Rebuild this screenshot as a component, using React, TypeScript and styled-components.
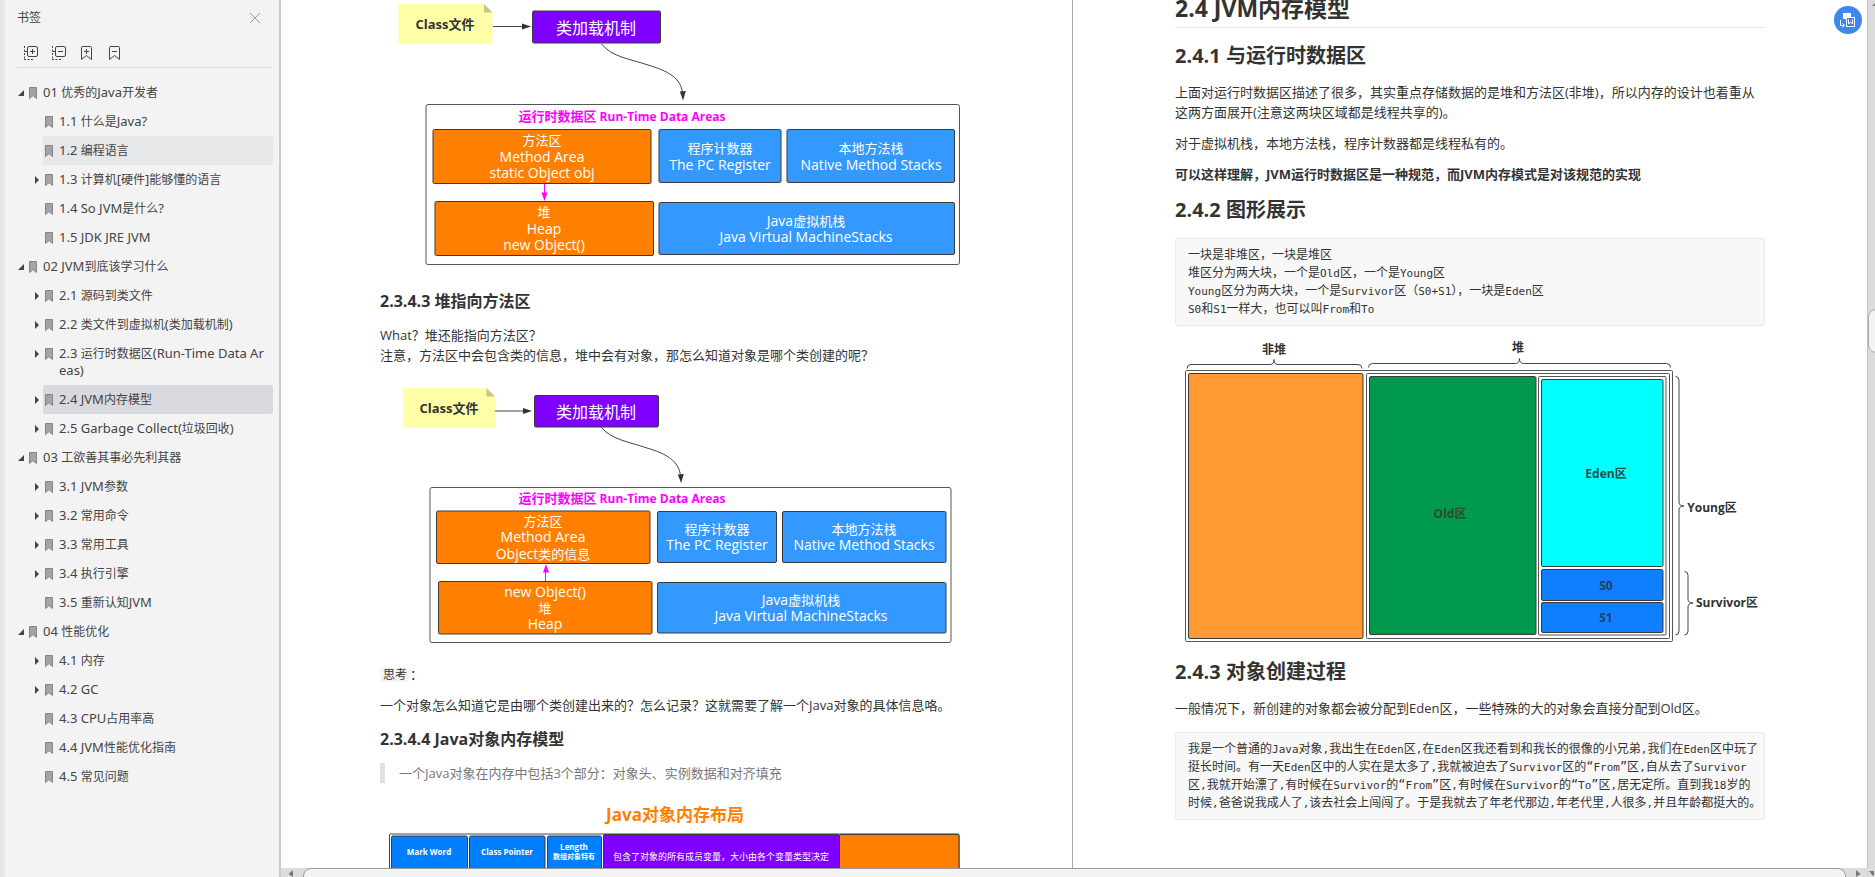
import React from 'react';
import styled, { createGlobalStyle } from 'styled-components';

const GlobalStyle = createGlobalStyle`
  * { box-sizing: border-box; }
  body {
    margin: 0;
    overflow: hidden;
    background: #fff;
    color: #333;
    font-family: 'Open Sans', 'Noto Sans CJK SC', sans-serif;
  }
  button { border: 0; padding: 0; background: none; cursor: pointer; }
  a { color: inherit; text-decoration: none; }
`;

const Shell = styled.div`
  display: flex;
  height: 100vh;
  overflow: hidden;
`;

/* ---------- bookmark panel ---------- */

const Sidebar = styled.aside`
  flex: 0 0 281px;
  background: #f3f3f3;
  border-left: 5px solid #e6e6e6;
  border-right: 2px solid #ccc;
  color: #444;
  font-family: 'Noto Sans', 'Noto Sans CJK SC', sans-serif;
`;

const PanelHead = styled.div`
  display: flex;
  align-items: center;
  justify-content: space-between;
  height: 36px;
  padding: 0 18px 0 12px;
`;

const PanelTitle = styled.h2`
  margin: 0;
  font-size: 12px;
  line-height: 20px;
  font-weight: 400;
`;

const IconButton = styled.button`
  display: flex;
  color: #444;
`;

const CloseButton = styled(IconButton)`
  color: #999;
`;

const PanelTools = styled.div`
  display: flex;
  align-items: center;
  gap: 12px;
  height: 32px;
  margin: 0 7px 10px 12px;
  padding: 2px 6px 0;
  border-bottom: 1px solid #dcdcdc;
`;

const Tree = styled.ul`
  list-style: none;
  margin: 0;
  padding: 0 6px;
`;

const Row = styled.li<{ $child?: boolean }>`
  display: flex;
  padding-left: ${p => (p.$child ? 16 : 0)}px;
`;

const Toggle = styled.button`
  flex: 0 0 16px;
  height: 29px;
  display: flex;
  align-items: center;
  justify-content: center;
  padding-left: 4px;
`;

const ToggleGap = styled.span`
  flex: 0 0 16px;
`;

const Entry = styled.a<{ $tone?: 'hover' | 'active' }>`
  flex: 1;
  display: flex;
  gap: 6px;
  padding: 6px 6px 6px 2px;
  border-radius: 2px;
  font-size: 12px;
  line-height: 17px;
  word-break: break-all;
  background: ${p =>
    p.$tone === 'active' ? '#d9dadf' : p.$tone === 'hover' ? '#e6e7e9' : 'transparent'};
  svg { flex: 0 0 8px; margin-top: 3px; }
`;

const WideLatin = styled.span`
  font-size: 13px;
  line-height: 1;
`;

/* ---------- document area ---------- */

const Main = styled.main`
  position: relative;
  flex: 1;
  min-width: 0;
  display: flex;
  flex-direction: column;
`;

const Viewport = styled.div`
  flex: 1;
  min-height: 0;
  display: flex;
`;

const Pages = styled.div`
  flex: 1;
  min-width: 0;
  display: grid;
  grid-template-columns: 791fr 795fr;
  overflow: hidden;
`;

const Page = styled.article<{ $second?: boolean }>`
  min-width: 0;
  padding: 0 99px;
  ${p => p.$second && 'padding: 0 102px; border-left: 1px solid #aaa;'}
`;

const Column = styled.div`
  max-width: 590px;
  svg { display: block; overflow: visible; }
`;

const ChapterTitle = styled.h2`
  margin: -8px 0 14px;
  padding-bottom: 3px;
  border-bottom: 1px solid #e8e8e8;
  font-size: 23px;
  line-height: 32px;
`;

const SectionTitle = styled.h3`
  margin: 12px 0;
  font-size: 20px;
  line-height: 28px;
`;

const TopicTitle = styled.h4`
  margin: 12px 0;
  font-size: 16px;
  line-height: 24px;
`;

const Text = styled.p`
  margin: 11px 0;
  font-size: 13px;
  line-height: 20px;
  ${TopicTitle} + &, ${SectionTitle} + & { margin-top: 12px; }
`;

const Chip = styled.code`
  padding: 0 3px;
  border-radius: 3px;
  background: #f3f4f4;
  font-family: 'DejaVu Sans Mono', 'Noto Sans CJK SC', monospace;
  font-size: 12px;
  line-height: 1;
`;

const Quote = styled.blockquote`
  margin: 12px 0;
  padding-left: 14px;
  border-left: 5px solid #dfe2e5;
  color: #777;
  font-size: 13px;
  line-height: 20px;
`;

const CodeBlock = styled.pre`
  margin: 14px 0 0;
  padding: 7px 12px;
  border: 1px solid #e7eaed;
  border-radius: 3px;
  background: #f8f8f8;
  font-family: 'DejaVu Sans Mono', 'Noto Sans CJK SC', monospace;
  font-size: 12px;
  line-height: 18px;
`;

const SmallLatin = styled.span`
  font-size: 11px;
  line-height: 1;
`;

const ConvertButton = styled.button`
  position: absolute;
  top: 6px;
  right: 13px;
  width: 28px;
  height: 28px;
  border-radius: 50%;
  background: #3f86ee;
  display: flex;
  align-items: center;
  justify-content: center;
`;

/* ---------- scroll bars ---------- */

const VTrack = styled.div`
  flex: 0 0 8px;
  display: flex;
  flex-direction: column;
  overflow: hidden;
  background: #dcdcdc;
  border-left: 1px solid #c4c4c4;
`;

const VThumb = styled.div`
  width: 18px;
  height: 44px;
  margin-top: 301px;
  border: 1px solid #aaa;
  border-radius: 8px;
  background: #f3f3f3;
`;

const HTrack = styled.div`
  flex: 0 0 9px;
  display: flex;
  gap: 8px;
  padding: 0 1px 0 6px;
  overflow: hidden;
  background: #dcdcdc;
`;

const HThumb = styled.div`
  flex: 1;
  height: 18px;
  border: 1px solid #999;
  border-radius: 8px;
  background: #f3f3f3;
`;

/* ---------- helpers ---------- */

function Mixed({ text, latin: Latin }: { text: string; latin: React.ElementType }) {
  return (
    <>
      {text.split(/([\x20-\x7e]+)/).map((run, i) =>
        i % 2 ? <Latin key={i}>{run}</Latin> : run
      )}
    </>
  );
}

const Bookmark = () => (
  <svg width="8" height="12" viewBox="0 0 8 12" aria-hidden="true">
    <path d="M0.5 0.5h7v11L4 8.6 0.5 11.5z" fill="#a4a4a4" stroke="#858585" />
  </svg>
);

const Latin14 = ({ children }: { children?: React.ReactNode }) => (
  <tspan fontSize={14}>{children}</tspan>
);

const Latin12 = ({ children }: { children?: React.ReactNode }) => (
  <tspan fontSize={12}>{children}</tspan>
);

function Lines({ x, ys, lines, size = 13, fill = '#fff', bold, latin }: {
  x: number; ys: number[]; lines: string[]; size?: number; fill?: string; bold?: boolean;
  latin?: React.ElementType;
}) {
  return (
    <>
      {lines.map((t, i) => (
        <text key={t} x={x} y={ys[i]} fontSize={size} fill={fill} textAnchor="middle"
          fontWeight={bold ? 700 : 400}>
          {latin ? <Mixed text={t} latin={latin} /> : t}
        </text>
      ))}
    </>
  );
}

function Box({ x, y, w, h, fill }: { x: number; y: number; w: number; h: number; fill: string }) {
  return <rect x={x} y={y} width={w} height={h} rx="1.5" fill={fill} stroke="#3a3a3a" />;
}

const ORANGE = '#ff8000';
const BLUE = '#3399ff';
const PURPLE = '#8000ff';
const PINK = '#ff00ff';

/* The canvas starts at the left edge of the text column. */
function FirstDiagram() {
  return (
    <svg width="590" height="277" viewBox="380 0 590 277" role="img" aria-label="静态变量指向堆">
      <path d="M398.5 4H484l8.500 8.500V43.500H398.500z" fill="#ffffa8" />
      <path d="M484 4l8.500 8.500H484z" fill="#c5c584" />
      <Lines x={445} ys={[29]} lines={['Class文件']} fill="#333" bold />
      <path d="M493 26.500H524" stroke="#444" />
      <path d="M522 23.500l9 3-9 3z" fill="#333" />
      <Box x={532.5} y={11} w={128} h={32} fill={PURPLE} />
      <Lines x={596} ys={[34]} lines={['类加载机制']} size={16} />
      <path d="M601.500 44C612 57 630 59 648 65C668 71 681 78 682.500 93" fill="none" stroke="#444" />
      <path d="M679.800 91.500l6-.5-2.700 9.500z" fill="#333" />
      <rect x="426" y="104.500" width="533.500" height="160" rx="2" fill="#fff" stroke="#555" />
      <Lines x={622} ys={[121]} lines={['运行时数据区 Run-Time Data Areas']} fill={PINK} latin={Latin12} bold />
      <Box x={433} y={129.5} w={218} h={54} fill={ORANGE} />
      <Lines x={542} ys={[145, 162, 178]} lines={['方法区', 'Method Area', 'static Object obj']} latin={Latin14} />
      <Box x={435} y={201.5} w={218.5} h={54} fill={ORANGE} />
      <Lines x={544} ys={[217, 234, 250]} lines={['堆', 'Heap', 'new Object()']} latin={Latin14} />
      <Box x={659} y={129.5} w={122} h={53} fill={BLUE} />
      <Lines x={720} ys={[153, 170]} lines={['程序计数器', 'The PC Register']} latin={Latin14} />
      <Box x={787} y={129.5} w={167.5} h={53} fill={BLUE} />
      <Lines x={871} ys={[153, 170]} lines={['本地方法栈', 'Native Method Stacks']} latin={Latin14} />
      <Box x={659} y={202.5} w={295.5} h={52} fill={BLUE} />
      <Lines x={806} ys={[226, 242]} lines={['Java虚拟机栈', 'Java Virtual MachineStacks']} latin={Latin14} />
      <path d="M544.500 184v10" stroke={PINK} />
      <path d="M541.500 192.500h6l-3 8.500z" fill={PINK} />
    </svg>
  );
}

function SecondDiagram() {
  return (
    <svg width="590" height="277" viewBox="380 376 590 277" role="img" aria-label="堆指向方法区">
      <path d="M403 388H486.500l8.500 8.500V427.500H403z" fill="#ffffa8" />
      <path d="M486.500 388l8.500 8.500H486.500z" fill="#c5c584" />
      <Lines x={449} ys={[413]} lines={['Class文件']} fill="#333" bold />
      <path d="M495 411H524" stroke="#444" />
      <path d="M523 408l9 3-9 3z" fill="#333" />
      <Box x={534.5} y={395.5} w={124} h={31.5} fill={PURPLE} />
      <Lines x={596} ys={[418]} lines={['类加载机制']} size={16} />
      <path d="M601.500 427.500C612 440 630 442 647 448C667 454 679 461 680.500 476" fill="none" stroke="#444" />
      <path d="M677.800 474.500l6-.5-2.700 9z" fill="#333" />
      <rect x="430" y="487.500" width="521" height="155" rx="2" fill="#fff" stroke="#555" />
      <Lines x={622} ys={[503]} lines={['运行时数据区 Run-Time Data Areas']} fill={PINK} latin={Latin12} bold />
      <Box x={436.5} y={511} w={213.5} h={52.5} fill={ORANGE} />
      <Lines x={543} ys={[526, 542, 559]} lines={['方法区', 'Method Area', 'Object类的信息']} latin={Latin14} />
      <Box x={438.5} y={581.5} w={213.5} h={52.5} fill={ORANGE} />
      <Lines x={545} ys={[597, 613, 629]} lines={['new Object()', '堆', 'Heap']} latin={Latin14} />
      <Box x={657.5} y={511.5} w={119} h={51} fill={BLUE} />
      <Lines x={717} ys={[534, 550]} lines={['程序计数器', 'The PC Register']} latin={Latin14} />
      <Box x={782.5} y={511.5} w={163.5} h={51} fill={BLUE} />
      <Lines x={864} ys={[534, 550]} lines={['本地方法栈', 'Native Method Stacks']} latin={Latin14} />
      <Box x={657.5} y={582.5} w={288.5} h={50.5} fill={BLUE} />
      <Lines x={801} ys={[605, 621]} lines={['Java虚拟机栈', 'Java Virtual MachineStacks']} latin={Latin14} />
      <path d="M545.500 581v-9" stroke={PINK} />
      <path d="M543 572.500h6l-3-8.500z" fill={PINK} />
    </svg>
  );
}

function ObjectLayout() {
  const cell = '#0080ff';
  return (
    <svg width="590" height="120" viewBox="380 795 590 120" role="img" aria-label="Java对象内存布局">
      <Lines x={675} ys={[821]} lines={['Java对象内存布局']} size={17} fill={ORANGE} bold />
      <rect x="389.500" y="834" width="569.500" height="80" rx="1" fill="#fff" stroke="#444" />
      <Box x={391.5} y={836} w={76} h={80} fill={cell} />
      <Box x={469.5} y={836} w={75.5} h={80} fill={cell} />
      <Box x={547.5} y={836} w={54} h={80} fill={cell} />
      <Box x={603.5} y={834.5} w={236} h={80} fill={PURPLE} />
      <Box x={839.5} y={834.5} w={119.5} h={80} fill={ORANGE} />
      <Lines x={429} ys={[855]} lines={['Mark Word']} size={8} bold />
      <Lines x={507} ys={[855]} lines={['Class Pointer']} size={8} bold />
      <Lines x={574} ys={[850]} lines={['Length']} size={8} bold />
      <Lines x={574} ys={[859]} lines={['数组对象特有']} size={7} bold />
      <Lines x={721} ys={[860]} lines={['包含了对象的所有成员变量，大小由各个变量类型决定']} size={9} />
    </svg>
  );
}

function MemoryDiagram() {
  const ink = '#333';
  const frame = { fill: '#fff', stroke: '#555' };
  return (
    <svg width="590" height="320" viewBox="1175 326 590 320" role="img" aria-label="JVM内存模型">
      <Lines x={1274} ys={[354]} lines={['非堆']} size={12} fill={ink} bold />
      <Lines x={1518} ys={[352]} lines={['堆']} size={12} fill={ink} bold />
      <g fill="none" stroke="#444">
        <path d="M1187 368.500q0-4 4-4H1270q4 0 4-5q0 5 4 5H1358q4 0 4 4" />
        <path d="M1368.500 367.500q0-4 4-4H1515.500q4 0 4-5q0 5 4 5H1666.500q4 0 4 4" />
        <path d="M1675.500 376.500q3.500 0 3.500 4V502q0 4 5 4q-5 0-5 4V631q0 4-3.500 4" />
        <path d="M1684.500 571.500q3.500 0 3.500 4V599q0 4 5 4q-5 0-5 4V631q0 4-3.500 4" />
      </g>
      <rect x="1185.500" y="370.500" width="487" height="271" rx="1" {...frame} />
      <Box x={1188.5} y={373.5} w={174.5} h={265} fill="#ff9933" />
      <rect x="1366.500" y="373.500" width="303" height="265" rx="1" {...frame} />
      <Box x={1369.5} y={376.5} w={166.5} h={258} fill="#00994d" />
      <rect x="1538.500" y="376.500" width="127.500" height="258.500" rx="1" {...frame} />
      <Box x={1541.5} y={379.5} w={121.5} h={187} fill="#00ffff" />
      <Box x={1541.5} y={569.5} w={121.5} h={31} fill="#0f7fff" />
      <Box x={1541.5} y={602.5} w={121.5} h={30} fill="#0f7fff" />
      <Lines x={1450} ys={[518]} lines={['Old区']} size={12} fill="#2f4a35" bold />
      <Lines x={1606} ys={[478]} lines={['Eden区']} size={12} fill="#234a4a" bold />
      <Lines x={1606} ys={[590, 622]} lines={['S0', 'S1']} size={12} fill="#213f66" bold />
      <Lines x={1712} ys={[512]} lines={['Young区']} size={12} fill={ink} bold />
      <Lines x={1727} ys={[607]} lines={['Survivor区']} size={12} fill={ink} bold />
    </svg>
  );
}

/* ---------- data ---------- */

type Node = { label: string; level: 0 | 1; fold?: boolean; tone?: 'hover' | 'active' };

const nodes: Node[] = [
  { label: '01 优秀的Java开发者', level: 0, fold: true },
  { label: '1.1 什么是Java?', level: 1 },
  { label: '1.2 编程语言', level: 1, tone: 'hover' },
  { label: '1.3 计算机[硬件]能够懂的语言', level: 1, fold: true },
  { label: '1.4 So JVM是什么?', level: 1 },
  { label: '1.5 JDK JRE JVM', level: 1 },
  { label: '02 JVM到底该学习什么', level: 0, fold: true },
  { label: '2.1 源码到类文件', level: 1, fold: true },
  { label: '2.2 类文件到虚拟机(类加载机制)', level: 1, fold: true },
  { label: '2.3 运行时数据区(Run-Time Data Areas)', level: 1, fold: true },
  { label: '2.4 JVM内存模型', level: 1, fold: true, tone: 'active' },
  { label: '2.5 Garbage Collect(垃圾回收)', level: 1, fold: true },
  { label: '03 工欲善其事必先利其器', level: 0, fold: true },
  { label: '3.1 JVM参数', level: 1, fold: true },
  { label: '3.2 常用命令', level: 1, fold: true },
  { label: '3.3 常用工具', level: 1, fold: true },
  { label: '3.4 执行引擎', level: 1, fold: true },
  { label: '3.5 重新认知JVM', level: 1 },
  { label: '04 性能优化', level: 0, fold: true },
  { label: '4.1 内存', level: 1, fold: true },
  { label: '4.2 GC', level: 1, fold: true },
  { label: '4.3 CPU占用率高', level: 1 },
  { label: '4.4 JVM性能优化指南', level: 1 },
  { label: '4.5 常见问题', level: 1 },
];

const areaNotes = [
  '一块是非堆区，一块是堆区',
  '堆区分为两大块，一个是Old区，一个是Young区',
  'Young区分为两大块，一个是Survivor区（S0+S1），一块是Eden区',
  'S0和S1一样大，也可以叫From和To',
].join('\n');

const objectStory = [
  '我是一个普通的Java对象,我出生在Eden区,在Eden区我还看到和我长的很像的小兄弟,我们在Eden区中玩了',
  '挺长时间。有一天Eden区中的人实在是太多了,我就被迫去了Survivor区的“From”区,自从去了Survivor',
  '区,我就开始漂了,有时候在Survivor的“From”区,有时候在Survivor的“To”区,居无定所。直到我18岁的',
  '时候,爸爸说我成人了,该去社会上闯闯了。于是我就去了年老代那边,年老代里,人很多,并且年龄都挺大的。',
].join('\n');

/* ---------- toolbar icons ---------- */

const TreeIcon = ({ plus }: { plus?: boolean }) => (
  <svg width="16" height="16" viewBox="0 0 16 16" fill="none" stroke="currentColor">
    <rect x="4.500" y="1.500" width="10" height="10" rx="1.500" />
    <path d={plus ? 'M7 6.500h5M9.500 4v5' : 'M7 6.500h5'} />
    <path d="M1.500 1v14M1 14.500h10" strokeDasharray="2 1.500" />
    <path d="M1.500 6.500h3" />
  </svg>
);

const RibbonIcon = ({ plus }: { plus?: boolean }) => (
  <svg width="16" height="16" viewBox="0 0 16 16" fill="none" stroke="currentColor">
    <path d="M2.500 14.500v-12q0-1 1-1h8q1 0 1 1v12L7.500 10.500z" />
    <path d={plus ? 'M5 6.500h5M7.500 4v5' : 'M5 6.500h5'} />
  </svg>
);

export default function App() {
  return (
    <Shell>
      <GlobalStyle />
      <Sidebar>
        <PanelHead>
          <PanelTitle>书签</PanelTitle>
          <CloseButton aria-label="关闭">
            <svg width="12" height="12" viewBox="0 0 12 12" stroke="currentColor">
              <path d="M1 1l10 10M11 1L1 11" />
            </svg>
          </CloseButton>
        </PanelHead>
        <PanelTools>
          <IconButton aria-label="全部展开"><TreeIcon plus /></IconButton>
          <IconButton aria-label="全部折叠"><TreeIcon /></IconButton>
          <IconButton aria-label="添加书签"><RibbonIcon plus /></IconButton>
          <IconButton aria-label="删除书签"><RibbonIcon /></IconButton>
        </PanelTools>
        <Tree>
          {nodes.map(n => (
            <Row key={n.label} $child={n.level === 1}>
              {n.fold ? (
                <Toggle aria-label={n.label}>
                  {n.level === 0 ? (
                    <svg width="6" height="6" viewBox="0 0 6 6"><path d="M6 0v6H0z" fill="#444" /></svg>
                  ) : (
                    <svg width="4" height="8" viewBox="0 0 4 8"><path d="M0 0l4 4-4 4z" fill="#444" /></svg>
                  )}
                </Toggle>
              ) : (
                <ToggleGap />
              )}
              <Entry href="#" $tone={n.tone}>
                <Bookmark />
                <span><Mixed text={n.label} latin={WideLatin} /></span>
              </Entry>
            </Row>
          ))}
        </Tree>
      </Sidebar>

      <Main>
        <Viewport>
          <Pages>
            <Page>
              <Column>
                <FirstDiagram />
                <TopicTitle>2.3.4.3 堆指向方法区</TopicTitle>
                <Text>
                  What？堆还能指向方法区？<br />
                  注意，方法区中会包含类的信息，堆中会有对象，那怎么知道对象是哪个类创建的呢？
                </Text>
                <SecondDiagram />
                <Text><Chip>思考</Chip>：</Text>
                <Text>一个对象怎么知道它是由哪个类创建出来的？怎么记录？这就需要了解一个Java对象的具体信息咯。</Text>
                <TopicTitle>2.3.4.4 Java对象内存模型</TopicTitle>
                <Quote>一个Java对象在内存中包括3个部分：对象头、实例数据和对齐填充</Quote>
                <ObjectLayout />
              </Column>
            </Page>
            <Page $second>
              <Column>
                <ChapterTitle>2.4 JVM内存模型</ChapterTitle>
                <SectionTitle>2.4.1 与运行时数据区</SectionTitle>
                <Text>上面对运行时数据区描述了很多，其实重点存储数据的是堆和方法区(非堆)，所以内存的设计也着重从这两方面展开(注意这两块区域都是线程共享的)。</Text>
                <Text>对于虚拟机栈，本地方法栈，程序计数器都是线程私有的。</Text>
                <Text><strong>可以这样理解，JVM运行时数据区是一种规范，而JVM内存模式是对该规范的实现</strong></Text>
                <SectionTitle>2.4.2 图形展示</SectionTitle>
                <CodeBlock><Mixed text={areaNotes} latin={SmallLatin} /></CodeBlock>
                <MemoryDiagram />
                <SectionTitle>2.4.3 对象创建过程</SectionTitle>
                <Text>一般情况下，新创建的对象都会被分配到Eden区，一些特殊的大的对象会直接分配到Old区。</Text>
                <CodeBlock><Mixed text={objectStory} latin={SmallLatin} /></CodeBlock>
              </Column>
            </Page>
          </Pages>
          <VTrack>
            <svg width="10" height="8" viewBox="0 0 10 8"><path d="M4 6l5-5v5z" fill="#777" /></svg>
            <VThumb />
          </VTrack>
        </Viewport>
        <HTrack>
          <svg width="8" height="9" viewBox="0 0 8 9"><path d="M6 2v7L1.500 6z" fill="#777" /></svg>
          <HThumb />
          <svg width="20" height="9" viewBox="0 0 20 9">
            <path d="M2 2v7l4.500-3z" fill="#777" />
            <path d="M15 3h8l-4 5z" fill="#777" />
          </svg>
        </HTrack>
        <ConvertButton aria-label="转换为Word">
          <svg width="18" height="18" viewBox="0 0 18 18" fill="none" stroke="#fff">
            <path d="M4 8V2h8v4H8v2z" fill="#fff" stroke="none" />
            <rect x="7.500" y="6.500" width="8" height="9" fill="#3f86ee" />
            <path d="M9.500 8.500v4.500l2-2 2 2V8.500" />
            <path d="M1.500 9v5.500H5.500M3.500 12.500l2 2-2 2" />
          </svg>
        </ConvertButton>
      </Main>
    </Shell>
  );
}
